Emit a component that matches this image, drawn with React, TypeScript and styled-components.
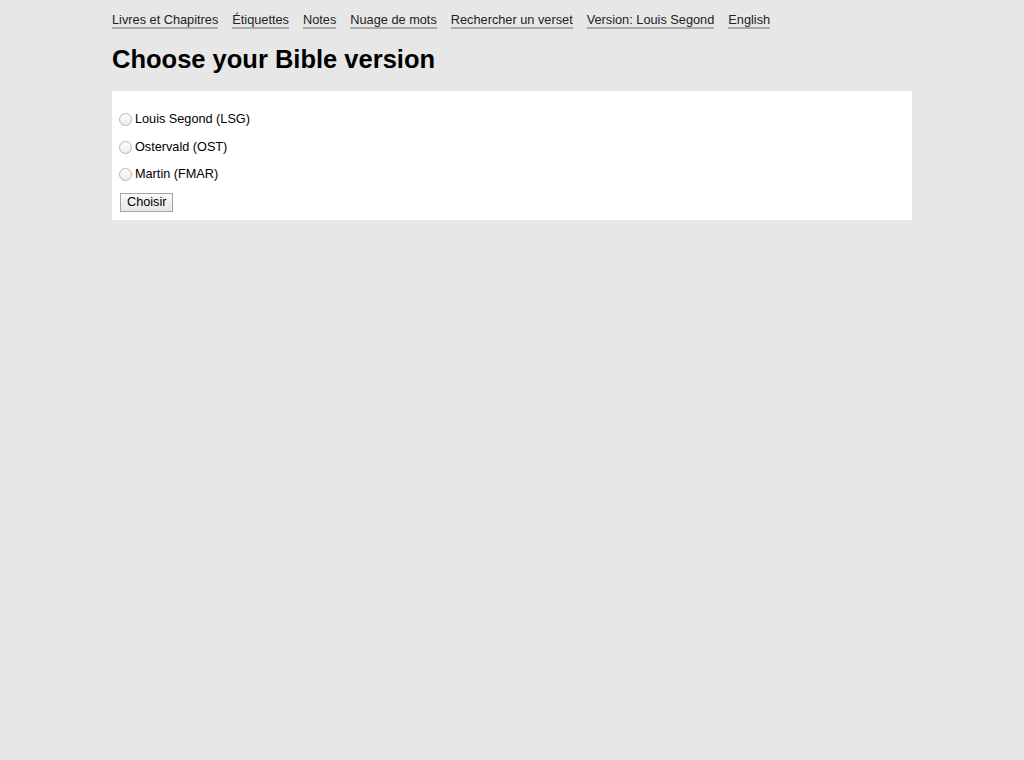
import React from 'react'
import styled, { createGlobalStyle } from 'styled-components'

const GlobalStyle = createGlobalStyle`
  html, body {
    margin: 0;
    padding: 0;
    background: #e7e7e7;
    font-family: "Liberation Sans", Arial, Helvetica, sans-serif;
    color: #000;
  }
`

const Page = styled.div`
  width: 800px;
  margin: 0 auto;
  padding-top: 13px;
`

const Nav = styled.nav`
  display: flex;
  gap: 14px;
  font-size: 12.75px;
  line-height: 14px;
`

const NavLink = styled.a`
  color: #222;
  text-decoration: none;
  border-bottom: 2px solid #aaa;
  cursor: pointer;
`

const Title = styled.h1`
  font-size: 25.5px;
  font-weight: bold;
  margin: 15px 0 17px;
  line-height: 30px;
`

const Panel = styled.form`
  background: #fff;
  padding: 20px 8px 8px 7px;
  display: flex;
  flex-direction: column;
  align-items: flex-start;
`

const Option = styled.label`
  display: flex;
  align-items: center;
  font-size: 12.7px;
  line-height: 16px;
  height: 16px;
  margin-bottom: 11.5px;
  gap: 3px;
`

const Radio = styled.input.attrs({ type: 'radio' })`
  appearance: none;
  width: 13px;
  height: 13px;
  margin: 1px 0 0;
  border-radius: 50%;
  border: 1px solid #b5b5b5;
  background: linear-gradient(#fff, #ececec);
  box-sizing: border-box;
  &:checked {
    background: radial-gradient(circle, #333 0 3px, #fff 3.5px);
  }
`

const Button = styled.button`
  font-family: "Liberation Sans", Arial, sans-serif;
  font-size: 12.7px;
  line-height: 15px;
  height: 19px;
  padding: 0 6px;
  margin: -1px 0 0 1px;
  border: 1px solid #a3a3a3;
  background: linear-gradient(#fafafa, #e6e6e6);
  color: #000;
  border-radius: 0;
`

const links = [
  'Livres et Chapitres',
  'Étiquettes',
  'Notes',
  'Nuage de mots',
  'Rechercher un verset',
  'Version: Louis Segond',
  'English',
]

const versions = ['Louis Segond (LSG)', 'Ostervald (OST)', 'Martin (FMAR)']

export default function App() {
  return (
    <>
      <GlobalStyle />
      <Page>
        <Nav>
          {links.map((l) => (
            <NavLink key={l}>{l}</NavLink>
          ))}
        </Nav>
        <Title>Choose your Bible version</Title>
        <Panel onSubmit={(e) => e.preventDefault()}>
          {versions.map((v) => (
            <Option key={v}>
              <Radio name="version" value={v} />
              {v}
            </Option>
          ))}
          <Button type="submit">Choisir</Button>
        </Panel>
      </Page>
    </>
  )
}
